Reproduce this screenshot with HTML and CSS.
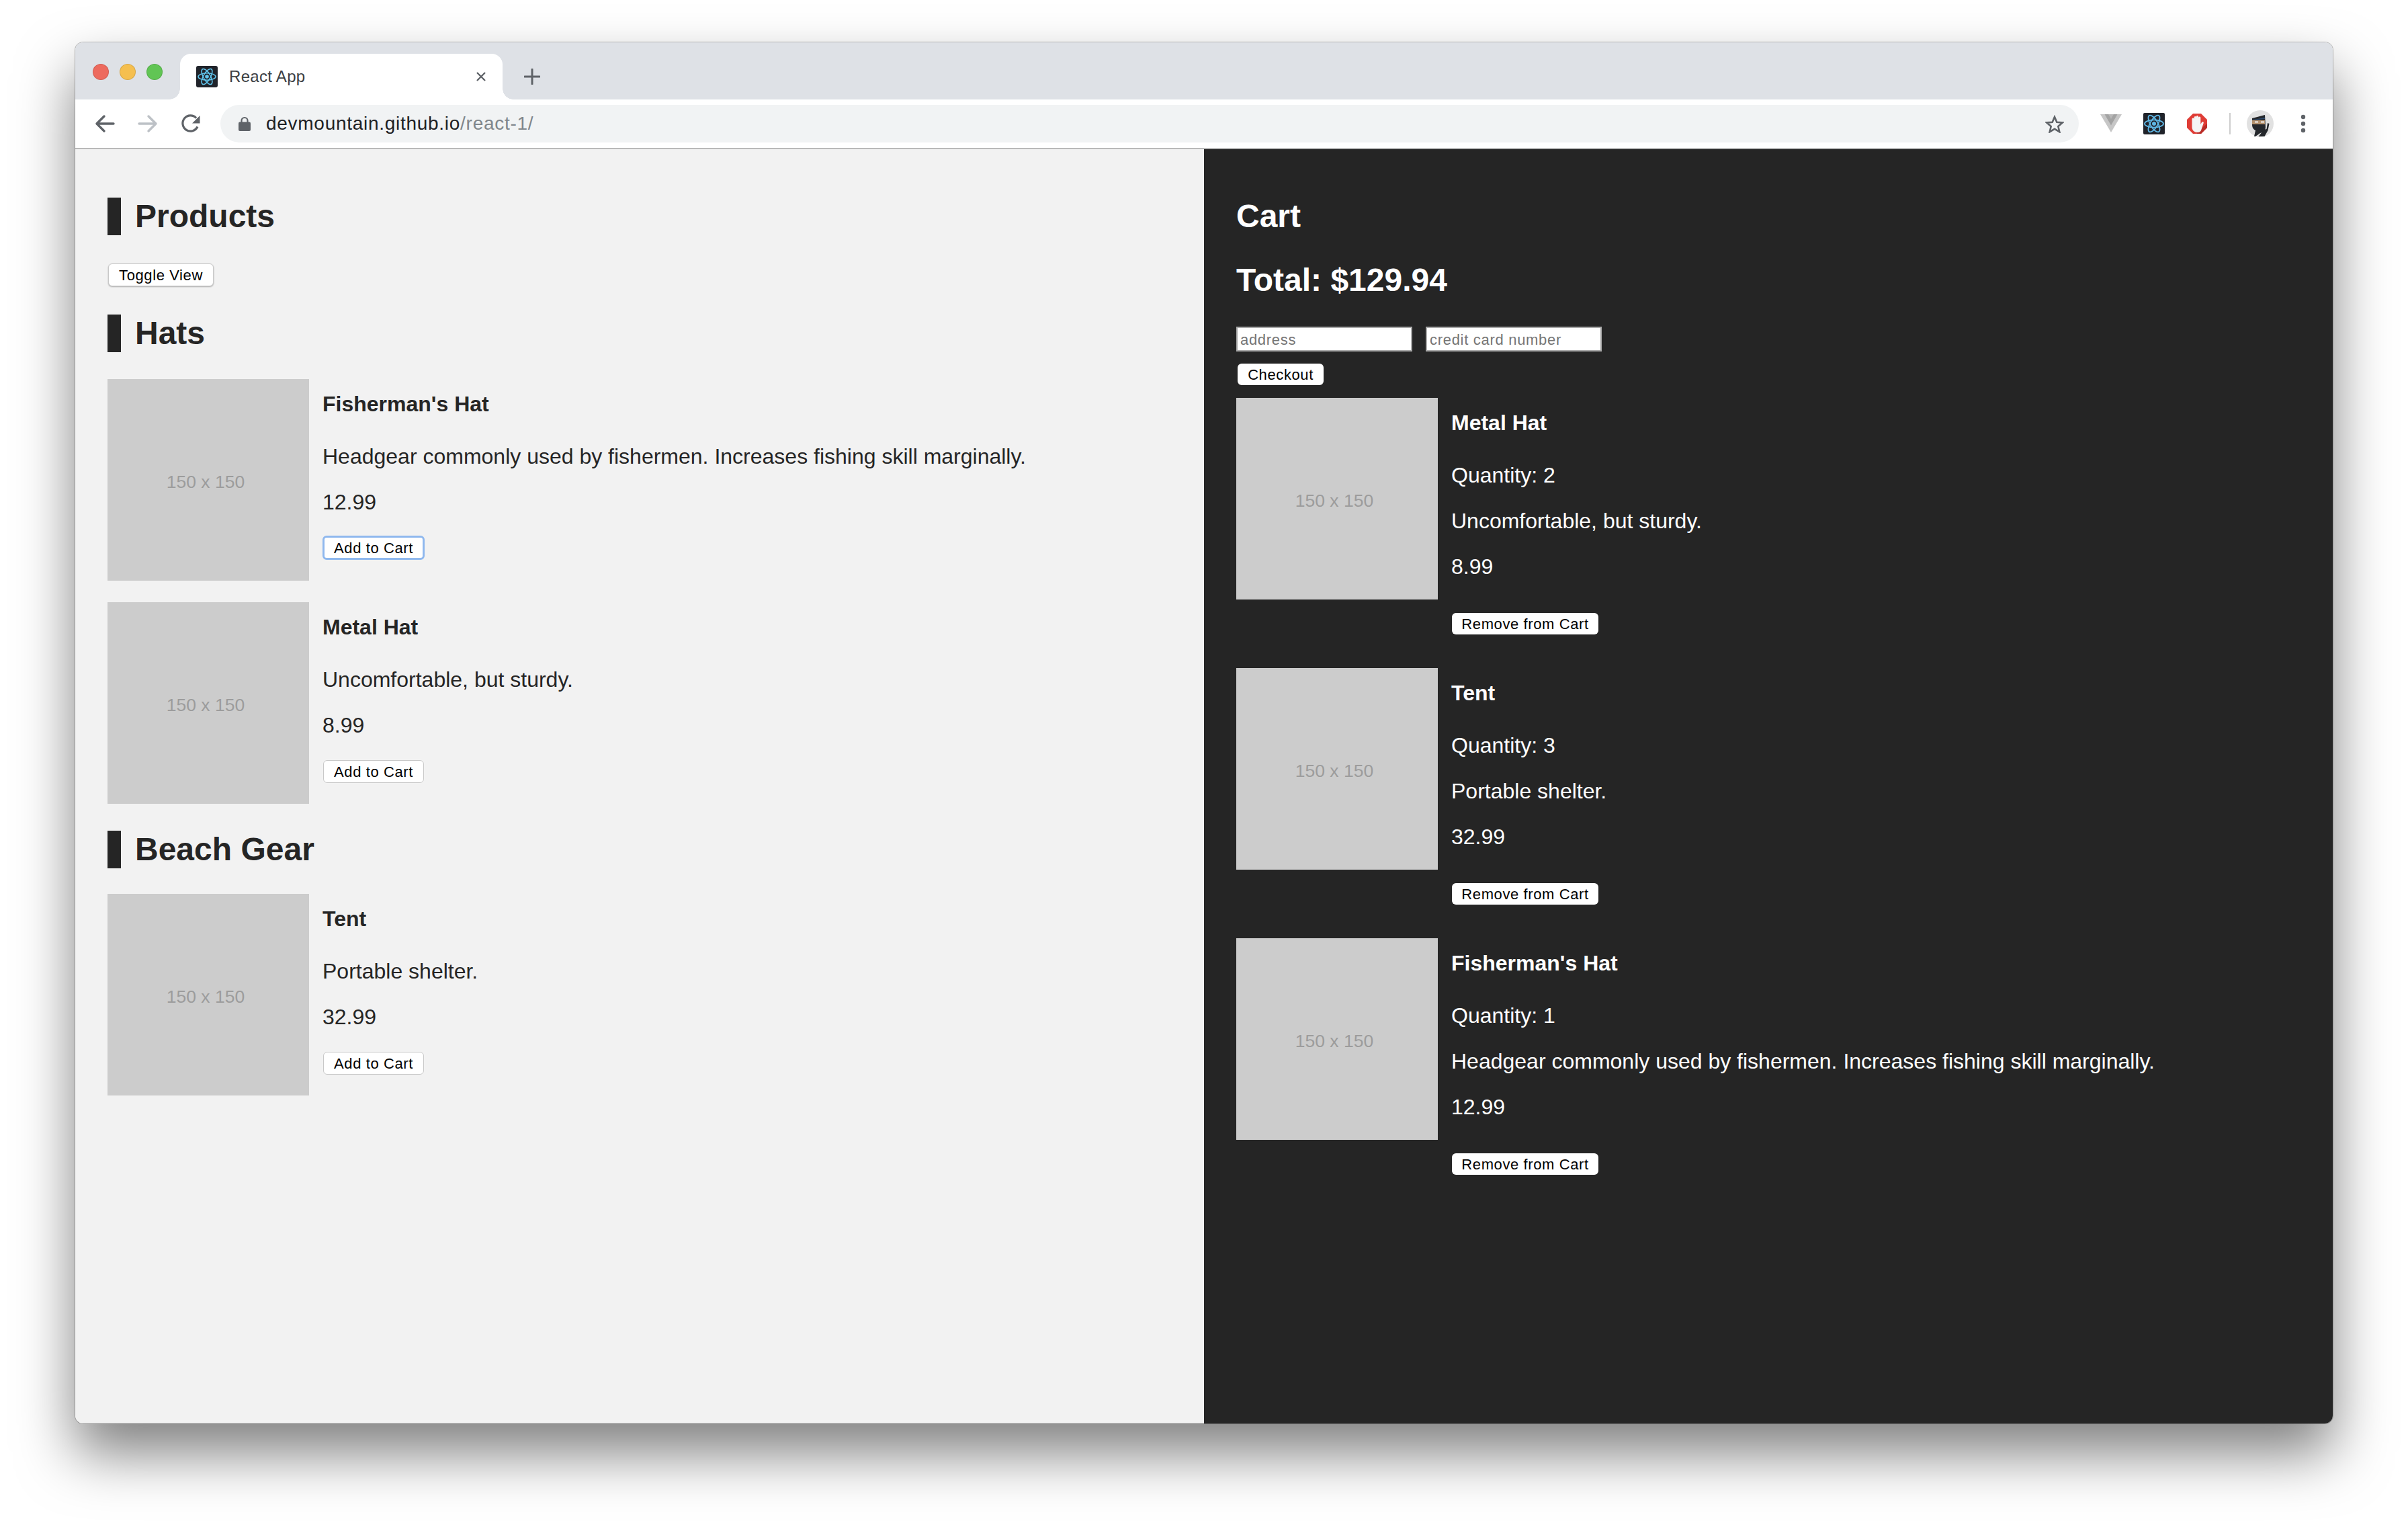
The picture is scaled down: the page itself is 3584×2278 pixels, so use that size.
FILE: index.html
```html
<!DOCTYPE html>
<html lang="en">
  <head>
    <meta charset="UTF-8" />
    <title>React App</title>
    <link rel="stylesheet" href="styles.css">
  </head>
  <body>
    <div class="window">
      <!-- Tab strip -->
      <div class="tabstrip">
        <div class="lights">
          <span class="light red"></span>
          <span class="light yellow"></span>
          <span class="light green"></span>
        </div>
        <div class="tab">
          <svg class="favicon" viewBox="0 0 32 32">
            <rect width="32" height="32" rx="3" fill="#20232a" />
            <g fill="none" stroke="#61c6ee" stroke-width="1.5">
              <ellipse cx="16" cy="16" rx="13" ry="5.2" />
              <ellipse cx="16" cy="16" rx="13" ry="5.2" transform="rotate(60 16 16)" />
              <ellipse cx="16" cy="16" rx="13" ry="5.2" transform="rotate(120 16 16)" />
            </g>
            <circle cx="16" cy="16" r="2.8" fill="#61c6ee" />
          </svg>
          <span class="tab-title">React App</span>
          <svg class="tab-close" viewBox="0 0 16 16">
            <path d="M2 2l12 12M14 2L2 14" stroke="#5f6368" stroke-width="2.4" fill="none" />
          </svg>
        </div>
        <svg class="new-tab" viewBox="0 0 24 24">
          <path d="M12 1v22M1 12h22" stroke="#5f6368" stroke-width="3" stroke-linecap="round" fill="none" />
        </svg>
      </div>

      <!-- Toolbar -->
      <div class="toolbar">
        <svg class="nav-icon" viewBox="0 0 32 32">
          <path d="M29 16H5M15 5L4 16l11 11" fill="none" stroke="#5f6368" stroke-width="3.4" stroke-linecap="round" stroke-linejoin="round" />
        </svg>
        <svg class="nav-icon" viewBox="0 0 32 32">
          <path d="M3 16h24M17 5l11 11-11 11" fill="none" stroke="#bdc1c6" stroke-width="3.4" stroke-linecap="round" stroke-linejoin="round" />
        </svg>
        <svg class="nav-icon" viewBox="0 0 32 32">
          <path d="M26 20.5A11.6 11.6 0 1 1 24 7.6" fill="none" stroke="#5f6368" stroke-width="3.2" />
          <path d="M29.5 4v11.5H18z" fill="#5f6368" />
        </svg>
        <div class="omnibox">
          <svg class="lock" viewBox="0 0 18 22">
            <path d="M4.5 9V6.5a4.5 4.5 0 0 1 9 0V9" fill="none" stroke="#5f6368" stroke-width="2.2" />
            <rect y="8.5" width="18" height="13.5" rx="2" fill="#5f6368" />
          </svg>
          <span class="url">devmountain.github.io<span class="url-path">/react-1/</span></span>
          <svg class="star" viewBox="0 0 32 30">
            <path d="M16 3l3.8 8.9 9.6.8-7.3 6.3 2.2 9.4L16 23.4 7.7 28.4l2.2-9.4-7.3-6.3 9.6-.8z" fill="none" stroke="#5f6368" stroke-width="3" stroke-linejoin="miter" />
          </svg>
        </div>
        <svg class="ext" viewBox="0 0 32 32">
          <path d="M0 2h32L16 29z" fill="#c6c6c6" />
          <path d="M6.500 2h19L16 18.500z" fill="#a3a3a3" />
          <path d="M12 2h8l-4 7z" fill="#b8b8b8" />
        </svg>
        <svg class="ext" viewBox="0 0 32 32">
          <rect width="32" height="32" rx="2" fill="#20232a" />
          <g fill="none" stroke="#5fb7e5" stroke-width="1.800">
            <ellipse cx="16" cy="16" rx="14" ry="5.600" />
            <ellipse cx="16" cy="16" rx="14" ry="5.600" transform="rotate(60 16 16)" />
            <ellipse cx="16" cy="16" rx="14" ry="5.600" transform="rotate(120 16 16)" />
          </g>
          <circle cx="16" cy="16" r="3" fill="#5fb7e5" />
        </svg>
        <svg class="ext" viewBox="0 0 32 32">
          <path d="M10 1h12l9 9v12l-9 9H10l-9-9V10z" fill="#df3d36" />
          <path d="M31 16v6l-9 9H16v-3z" fill="#b92c27" />
          <path d="M8.500 18V9a1.600 1.600 0 0 1 3.200 0V6.500a1.600 1.600 0 0 1 3.200 0V5.500a1.600 1.600 0 0 1 3.200 0V7a1.600 1.600 0 0 1 3.200 0v10l1.700-3a1.500 1.500 0 0 1 2.700 1.300L22 26c-1 2-2.500 3-5 3-5 0-8.500-3-8.500-8z" fill="#f5f5f5" />
        </svg>
        <span class="sep"></span>
        <svg class="avatar" viewBox="0 0 40 40">
          <circle cx="20" cy="20" r="20" fill="#e1e1e1" />
          <path d="M8 12l19-5 1 18c0 5-3 8-8 9l-7 5h-2l2-9c-4-2-5-5-5-9z" fill="#24272b" />
          <path d="M8 15h19v6H8z" fill="#b4916c" />
          <path d="M12 16.500h5v2h-5zM21 16.500h5v2h-5z" fill="#f2f2f2" />
          <path d="M9 14l18-3v2L8 15z" fill="#2f4a6b" />
          <path d="M31 19l2.500 1-2 10-5 9h-9l8-10 4-1z" fill="#24272b" />
        </svg>
        <svg class="dots" viewBox="0 0 8 28">
          <circle cx="4" cy="4" r="3.200" fill="#5f6368" />
          <circle cx="4" cy="14" r="3.200" fill="#5f6368" />
          <circle cx="4" cy="24" r="3.200" fill="#5f6368" />
        </svg>
      </div>

      <!-- Page -->
      <div class="app">
        <section class="products">
          <h2 class="section-title">Products</h2>
          <button class="btn toggle">Toggle View</button>

          <h2 class="section-title">Hats</h2>
          <div class="item">
            <div class="thumb">150 x 150</div>
            <div class="info">
              <h4>Fisherman's Hat</h4>
              <p>Headgear commonly used by fishermen. Increases fishing skill marginally.</p>
              <p>12.99</p>
              <button class="btn focused">Add to Cart</button>
            </div>
          </div>
          <div class="item">
            <div class="thumb">150 x 150</div>
            <div class="info">
              <h4>Metal Hat</h4>
              <p>Uncomfortable, but sturdy.</p>
              <p>8.99</p>
              <button class="btn add">Add to Cart</button>
            </div>
          </div>

          <h2 class="section-title">Beach Gear</h2>
          <div class="item">
            <div class="thumb">150 x 150</div>
            <div class="info">
              <h4>Tent</h4>
              <p>Portable shelter.</p>
              <p>32.99</p>
              <button class="btn add">Add to Cart</button>
            </div>
          </div>
        </section>

        <section class="cart">
          <h2 class="cart-title">Cart</h2>
          <h2 class="cart-total">Total: $129.94</h2>
          <div class="checkout-fields">
            <input type="text" placeholder="address" />
            <input type="text" placeholder="credit card number" />
          </div>
          <button class="btn plain checkout">Checkout</button>

          <div class="item cart-item">
            <div class="thumb">150 x 150</div>
            <div class="info">
              <h4>Metal Hat</h4>
              <p>Quantity: 2</p>
              <p>Uncomfortable, but sturdy.</p>
              <p>8.99</p>
              <button class="btn plain">Remove from Cart</button>
            </div>
          </div>
          <div class="item cart-item">
            <div class="thumb">150 x 150</div>
            <div class="info">
              <h4>Tent</h4>
              <p>Quantity: 3</p>
              <p>Portable shelter.</p>
              <p>32.99</p>
              <button class="btn plain">Remove from Cart</button>
            </div>
          </div>
          <div class="item cart-item">
            <div class="thumb">150 x 150</div>
            <div class="info">
              <h4>Fisherman's Hat</h4>
              <p>Quantity: 1</p>
              <p>Headgear commonly used by fishermen. Increases fishing skill marginally.</p>
              <p>12.99</p>
              <button class="btn plain">Remove from Cart</button>
            </div>
          </div>
        </section>
      </div>
    </div>
  </body>
</html>
```

FILE: styles.css
```css
* {
  box-sizing: border-box;
}

html,
body {
  height: 100%;
  overflow: hidden;
}

body {
  margin: 0;
  padding: 63px 112px 160px;
  background-color: #fff;
  font-family: "Liberation Sans", Arial, sans-serif;
}

/* Browser window */
.window {
  display: flex;
  flex-direction: column;
  height: 2055px;
  border-radius: 12px;
  overflow: hidden;
  box-shadow: 0 0 0 1px rgba(0, 0, 0, 0.25), 0 44px 84px rgba(0, 0, 0, 0.5);
}

.tabstrip {
  display: flex;
  align-items: flex-start;
  height: 85px;
  padding-left: 26px;
  background-color: #dee1e6;
}

.lights {
  display: flex;
  gap: 16px;
  margin-top: 32px;
  margin-right: 26px;
}

.light {
  width: 24px;
  height: 24px;
  border-radius: 50%;
  border: 1px solid rgba(0, 0, 0, 0.12);
}

.red {
  background-color: #ed6a5e;
}

.yellow {
  background-color: #f5bf4f;
}

.green {
  background-color: #61c554;
}

.tab {
  position: relative;
  display: flex;
  align-items: center;
  width: 480px;
  height: 68px;
  margin-top: 17px;
  padding: 0 24px;
  background-color: #fff;
  border-radius: 16px 16px 0 0;
}

/* Little flared corners at the foot of the tab */
.tab::before,
.tab::after {
  content: "";
  position: absolute;
  bottom: 0;
  width: 16px;
  height: 16px;
}

.tab::before {
  left: -16px;
  background: radial-gradient(circle at 0 0, #dee1e6 15.500px, #fff 16px);
}

.tab::after {
  right: -16px;
  background: radial-gradient(circle at 100% 0, #dee1e6 15.500px, #fff 16px);
}

.favicon {
  width: 32px;
  height: 32px;
  margin-right: 17px;
}

.tab-title {
  flex: 1;
  font-size: 24px;
  letter-spacing: 0.3px;
  color: #3c4043;
}

.tab-close {
  width: 16px;
  height: 16px;
}

.new-tab {
  width: 24px;
  height: 24px;
  margin-top: 39px;
  margin-left: 32px;
}

.toolbar {
  display: flex;
  align-items: center;
  gap: 32px;
  height: 74px;
  padding-left: 28px;
  background-color: #fff;
  border-bottom: 2px solid #b9b9b9;
}

.nav-icon {
  width: 32px;
  height: 32px;
}

.omnibox {
  display: flex;
  align-items: center;
  width: 2766px;
  height: 56px;
  margin-left: -4px;
  padding: 0 20px 0 27px;
  background-color: #f1f3f4;
  border-radius: 28px;
}

.lock {
  width: 18px;
  height: 22px;
  margin-right: 23px;
}

.url {
  flex: 1;
  font-size: 28px;
  letter-spacing: 0.72px;
  color: #202124;
}

.url-path {
  color: #80868b;
}

.star {
  width: 28px;
  height: 27px;
  margin-right: 2px;
}

.ext {
  width: 32px;
  height: 32px;
}

.sep {
  width: 2px;
  height: 32px;
  margin-right: -8px;
  background-color: #cdcdcd;
}

.avatar {
  width: 40px;
  height: 40px;
}

.dots {
  width: 8px;
  height: 28px;
  margin-left: 8px;
}

/* The React page */
.app {
  display: grid;
  grid-template-columns: 1fr 1fr;
  flex: 1;
  font-size: 32px;
}

.products {
  padding: 72px 48px 0;
  background-color: #f2f2f2;
  color: #252525;
}

.cart {
  padding: 72px 48px 0;
  background-color: #252525;
  color: #fff;
}

h2 {
  margin: 0;
  font-size: 48px;
  line-height: 56px;
}

.section-title {
  margin-bottom: 40px;
  padding-left: 21px;
  border-left: 20px solid #252525;
}

.section-title:first-child {
  margin-bottom: 42px;
}

.toggle {
  display: block;
  margin-bottom: 42px;
  margin-left: 1px;
  width: 157px;
  box-shadow: 0 1px 2px rgba(0, 0, 0, 0.3);
}

.item {
  display: flex;
  margin-bottom: 32px;
}

.item:last-child {
  margin-bottom: 0;
}

.item + .section-title {
  margin-top: 40px;
  margin-bottom: 38px;
}

.thumb {
  display: flex;
  flex: none;
  align-items: center;
  justify-content: center;
  width: 300px;
  height: 300px;
  padding: 6px 8px 0 0;
  background-color: #ccc;
  color: #9c9c9c;
  font-size: 26.500px;
}

.info {
  padding: 19px 0 0 20px;
}

h4 {
  margin: 0 0 42px;
  font-size: 32px;
  line-height: 36px;
}

p {
  margin: 0 0 32px;
  line-height: 36px;
}

.btn {
  display: block;
  height: 34px;
  padding: 2px 0 0;
  background-color: #fff;
  border: 1px solid #c8c8c8;
  border-radius: 6px;
  font-family: inherit;
  font-size: 22px;
  letter-spacing: 0.6px;
  color: #000;
}

.add {
  width: 150px;
  margin: 34px 0 0 1px;
}

.focused {
  width: 152px;
  height: 36px;
  border: 3px solid #8fb8ee;
}

.plain {
  height: 32px;
  border: none;
}

.checkout-fields {
  display: flex;
  gap: 20px;
  margin-bottom: 18px;
}

.cart-total {
  margin-top: 39px;
  margin-bottom: 41px;
}

input {
  width: 262px;
  height: 37px;
  padding: 2px 4px 0;
  border: 2px solid #a9a9a9;
  background-color: #fff;
  font-family: inherit;
  font-size: 22px;
  letter-spacing: 0.7px;
}

.checkout {
  width: 128px;
  margin-bottom: 19px;
  margin-left: 2px;
}

.cart-item {
  margin-bottom: 50px;
}

.cart-item .btn {
  width: 218px;
  margin-top: 51px;
  margin-left: 1px;
}
```
